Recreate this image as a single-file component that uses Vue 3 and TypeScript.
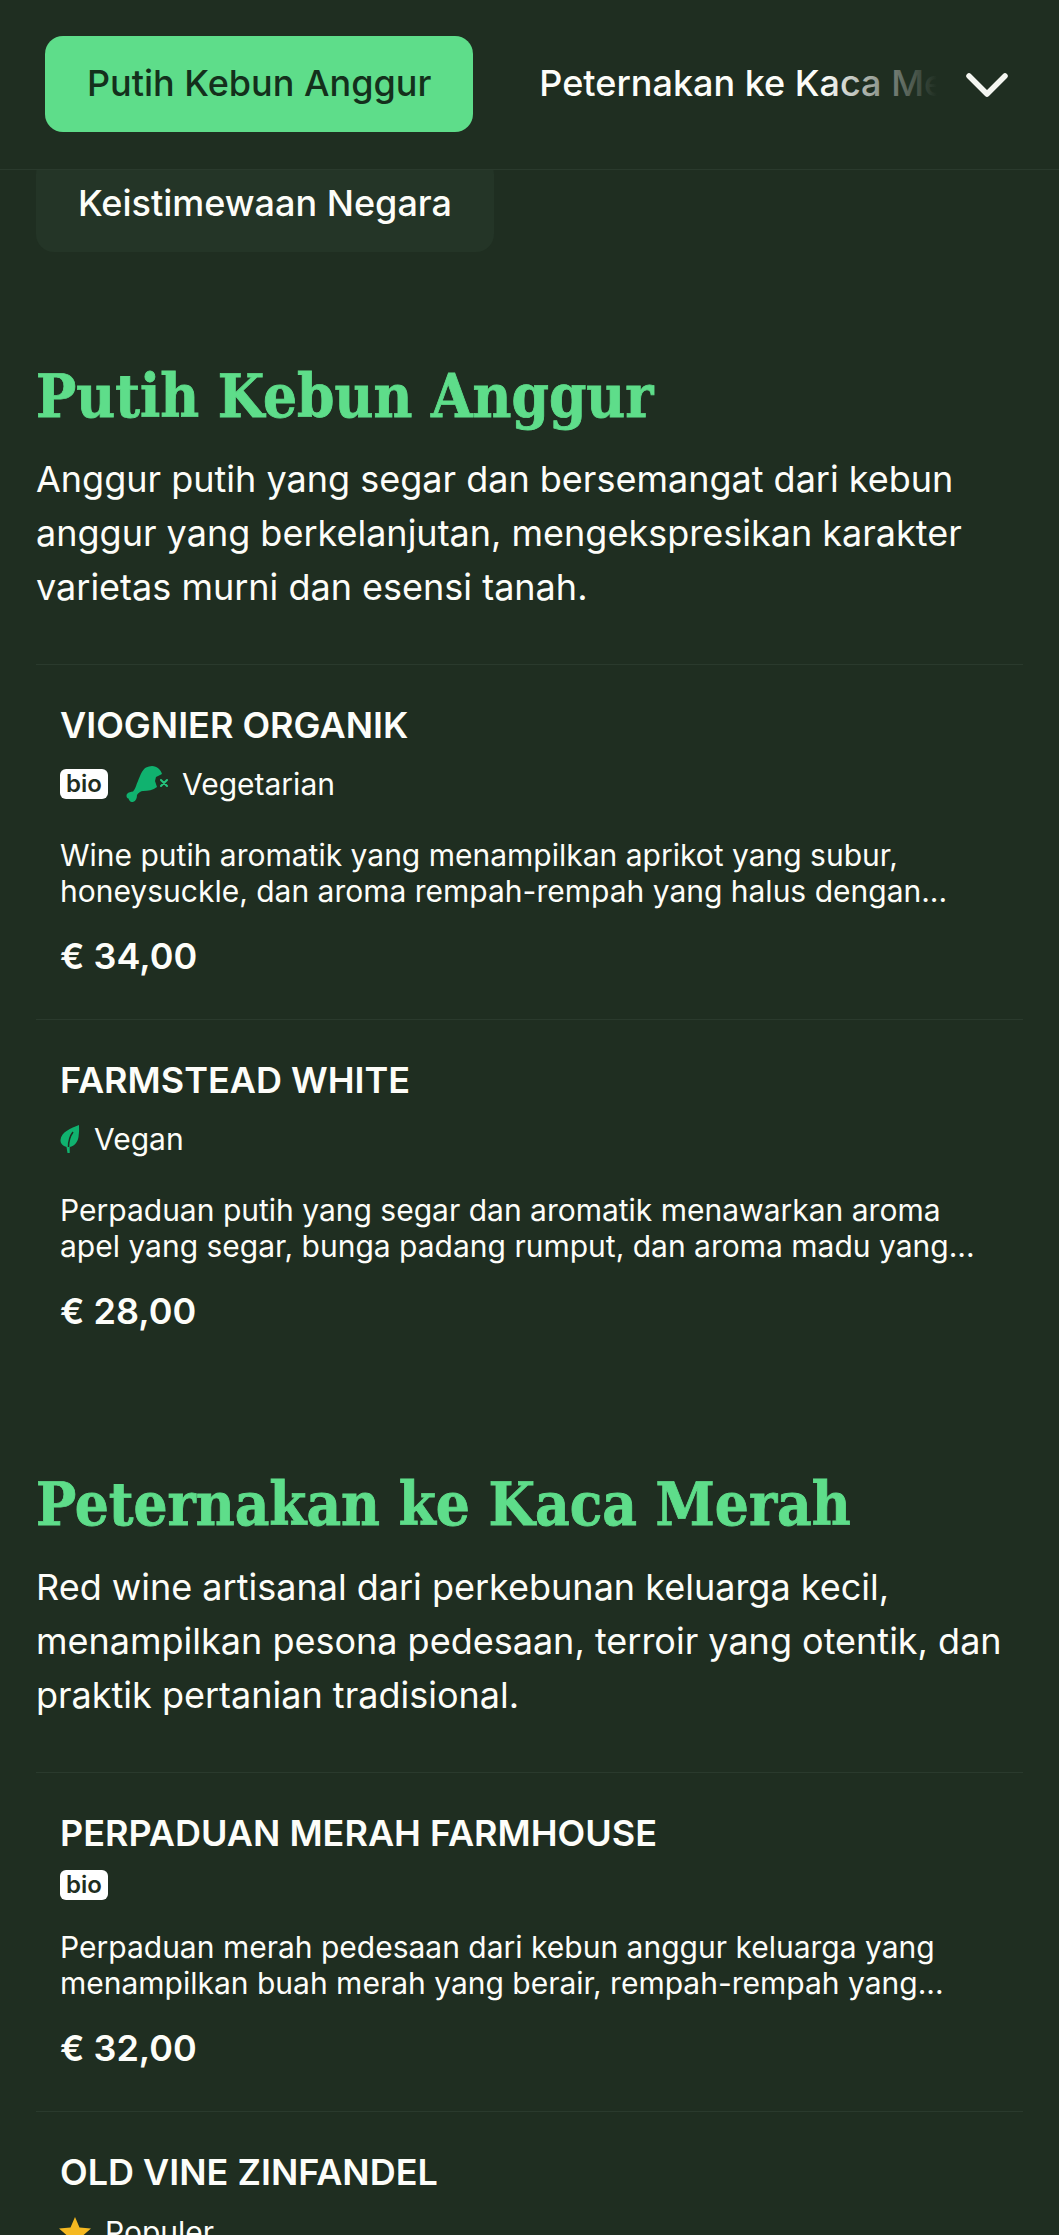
<script setup lang="ts">
interface Item { name: string; tags: string[]; desc: string[]; price: string }
interface Section { title: string; text: string; items: Item[] }

const sections: Section[] = [
  {
    title: 'Putih Kebun Anggur',
    text: 'Anggur putih yang segar dan bersemangat dari kebun anggur yang berkelanjutan, mengekspresikan karakter varietas murni dan esensi tanah.',
    items: [
      { name: 'VIOGNIER ORGANIK', tags: ['bio', 'vegetarian'], desc: ['Wine putih aromatik yang menampilkan aprikot yang subur,', 'honeysuckle, dan aroma rempah-rempah yang halus dengan...'], price: '€ 34,00' },
      { name: 'FARMSTEAD WHITE', tags: ['vegan'], desc: ['Perpaduan putih yang segar dan aromatik menawarkan aroma', 'apel yang segar, bunga padang rumput, dan aroma madu yang...'], price: '€ 28,00' },
    ],
  },
  {
    title: 'Peternakan ke Kaca Merah',
    text: 'Red wine artisanal dari perkebunan keluarga kecil, menampilkan pesona pedesaan, terroir yang otentik, dan praktik pertanian tradisional.',
    items: [
      { name: 'PERPADUAN MERAH FARMHOUSE', tags: ['bio'], desc: ['Perpaduan merah pedesaan dari kebun anggur keluarga yang', 'menampilkan buah merah yang berair, rempah-rempah yang...'], price: '€ 32,00' },
      { name: 'OLD VINE ZINFANDEL', tags: ['popular'], desc: [], price: '' },
    ],
  },
]
</script>

<template>
  <div class="page">
    <header class="topbar">
      <div class="tabs">
        <button class="tab active">Putih Kebun Anggur</button>
        <button class="tab">Peternakan ke Kaca Merah</button>
      </div>
      <div class="fade"></div>
      <svg class="chevron" viewBox="0 0 40 24" fill="none" stroke="currentColor" stroke-width="5.500" stroke-linecap="round" stroke-linejoin="round">
        <polyline points="2,3 20,21 38,3" />
      </svg>
    </header>

    <main class="content">
      <button class="tab second">Keistimewaan Negara</button>

      <section v-for="s in sections" :key="s.title" class="section">
        <h2>{{ s.title }}</h2>
        <p class="intro">{{ s.text }}</p>
        <article v-for="it in s.items" :key="it.name" class="item">
          <h3>{{ it.name }}</h3>
          <div class="tags" :class="{ compact: it.tags.length === 1 && it.tags[0] === 'bio' }">
            <template v-for="t in it.tags" :key="t">
              <span v-if="t === 'bio'" class="bio">bio</span>
              <span v-else-if="t === 'vegetarian'" class="tag">
                <svg class="ic-veg" viewBox="0 0 42 36">
                  <path fill="#10b26f" d="M26 0C31 0 35 4 36 8L30 11L29 15L31 21C27 24 22 25 17 25C15 25 12 27 11 29C11 32 10 35 7 36C4 36.500 3 34 2.500 32.500C.5 32 0 29.500 1 28C2.500 26 5 26 7 25.500C10 22 10 19 12 15C14 10 16 4 20 1.500C22 .5 24 0 26 0Z" />
                  <path stroke="#25c47e" stroke-width="2" stroke-linecap="round" fill="none" d="M35 14l6 6m0-6l-6 6" />
                </svg>
                Vegetarian
              </span>
              <span v-else-if="t === 'vegan'" class="tag vegan">
                <svg class="ic-leaf" viewBox="0 0 20 28">
                  <path fill="#10b26f" d="M19 0C11 3 1 7 .5 15c-.2 3.500 2.500 6 6 7L7.500 28h2.200V22c5-1 8-5 8.800-10C19.100 8 19.300 4 19 0z" />
                  <path fill="none" stroke="#1f2e21" stroke-width="1.500" d="M13 7C10 11 8.500 16 8.500 22" />
                </svg>
                Vegan
              </span>
              <span v-else class="tag popular">
                <svg class="ic-star" viewBox="0 0 32 30">
                  <path fill="#f5b921" d="M16 0l4.500 10.500L32 11.500l-8.700 7.600L26 30l-10-6-10 6 2.700-10.900L0 11.500l11.500-1z" />
                </svg>
                Populer
              </span>
            </template>
          </div>
          <p v-if="it.desc.length" class="desc"><span v-for="l in it.desc" :key="l" class="line">{{ l }}</span></p>
          <div v-if="it.price" class="price">{{ it.price }}</div>
        </article>
      </section>
    </main>
  </div>
</template>

<style>
html, body { margin: 0; background: #1f2e21; }
</style>

<style scoped>
.page {
  width: 1059px;
  height: 2235px;
  overflow: hidden;
  background: #1f2e21;
  color: #fdfdf9;
  font-family: Inter, "Liberation Sans", sans-serif;
}
.topbar {
  position: relative;
  z-index: 2;
  height: 169px;
  border-bottom: 1px solid #2a3a2d;
  background: #1f2e21;
  display: flex;
  overflow: hidden;
}
.tabs {
  display: flex;
  gap: 24px;
  padding: 36px 0 0 45px;
  align-items: flex-start;
  white-space: nowrap;
}
.tab {
  flex: none;
  height: 96px;
  padding: 0 42px 2px;
  border: 0;
  border-radius: 18px;
  background: transparent;
  color: #fdfdf9;
  font: 500 36px/44px Inter, "Liberation Sans", sans-serif;
}
.tab.active {
  background: #5edd8a;
  color: #14301c;
}
.fade {
  position: absolute;
  top: 0;
  right: 0;
  bottom: 0;
  width: 235px;
  background: linear-gradient(to right, rgba(31, 46, 33, 0), #1f2e21 48%);
}
.chevron {
  position: absolute;
  left: 967px;
  top: 73px;
  width: 40px;
  height: 24px;
  color: #f4f6f1;
  overflow: visible;
}
.content {
  padding: 0 36px;
}
.second {
  display: block;
  margin-top: -14px;
  background: #243527;
}
.section {
  margin-bottom: 93px;
}
.second + .section {
  margin-top: 106px;
}
h2 {
  margin: 0 0 21px;
  padding-top: 3px;
  font: 700 59.5px/70px "DejaVu Serif Condensed", "DejaVu Serif", serif;
  -webkit-text-stroke: 0.8px #5edd8a;
  color: #5edd8a;
}
.intro {
  margin: 0 0 50px;
  font-size: 36px;
  line-height: 54px;
  font-weight: 400;
}
.item {
  border-top: 1px solid #2a3a2d;
  padding: 38px 24px 40.5px;
}
h3 {
  margin: 0 0 19px;
  font: 600 36px/44px Inter, "Liberation Sans", sans-serif;
}
.tags {
  display: flex;
  align-items: center;
  height: 36px;
  font-size: 30px;
  line-height: 36px;
}
.tags.compact {
  height: 30px;
  margin-top: -4px;
  margin-bottom: -6px;
}
.bio {
  box-sizing: border-box;
  width: 48px;
  height: 30px;
  border-radius: 6px;
  background: #fff;
  color: #1f2e21;
  font-size: 24px;
  font-weight: 600;
  line-height: 29px;
  text-align: center;
  margin-right: 18px;
}
.tag {
  display: flex;
  align-items: center;
}
.popular {
  margin-top: 2px;
}
.ic-veg {
  width: 42px;
  height: 36px;
  margin-right: 14px;
}
.ic-leaf {
  width: 20px;
  height: 28px;
  margin-right: 14px;
}
.ic-star {
  width: 32px;
  height: 30px;
  margin-right: 14px;
  margin-left: -1px;
}
.desc {
  margin: 35px 0 0;
  font-size: 30px;
  line-height: 36px;
}
.line {
  display: block;
  white-space: nowrap;
}
.price {
  margin-top: 25px;
  font-size: 36px;
  line-height: 44px;
  font-weight: 600;
}
</style>
